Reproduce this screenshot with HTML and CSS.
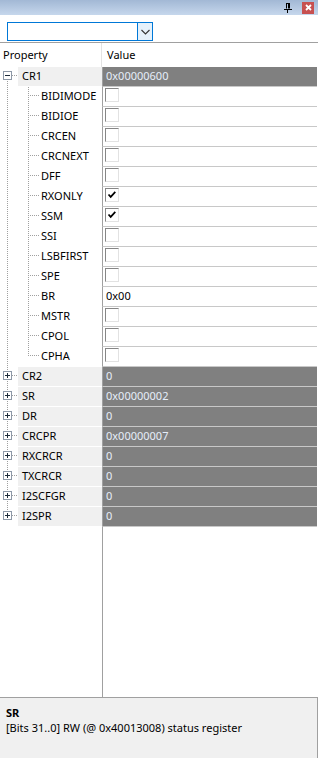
FILE: index.html
```html
<!DOCTYPE html>
<html lang="en">

<head>
    <meta charset="UTF-8">
    <meta name="viewport" content="width=device-width, initial-scale=1.0">
    <title>Registers</title>
    <link rel="stylesheet" href="styles.css">
</head>

<body>
    <div class="titlebar">
        <svg class="pin" width="8" height="10" viewBox="0 0 8 10">
            <path d="M2 0.5h4M2.5 0.5v5M5.5 0.5v5M4.5 0.5v5M0 6.5h8M3.5 7v3" stroke="#000" fill="none" stroke-width="1" />
        </svg>
        <span class="close">
            <svg width="7" height="7" viewBox="0 0 7 7">
                <path d="M1 1l5 5M6 1l-5 5" stroke="#fff" stroke-width="1.8" />
            </svg>
        </span>
    </div>

    <div class="toolbar">
        <div class="combo">
            <span class="combo-field"></span>
            <span class="combo-btn">
                <svg width="9" height="6" viewBox="0 0 9 6">
                    <path d="M0.5 1l4 4 4-4" stroke="#333" fill="none" stroke-width="1.1" />
                </svg>
            </span>
        </div>
    </div>

    <div class="head">
        <div class="h-prop">Property</div>
        <div class="h-val">Value</div>
    </div>

    <div class="rows">
        <!-- CR1, expanded -->
        <div class="row">
            <span class="gutter root first">
                <svg class="box" width="9" height="9" viewBox="0 0 9 9">
                    <rect x="0.5" y="0.5" width="8" height="8" fill="#fff" stroke="#8e99a8" />
                    <path d="M2 4.5h5" stroke="#1d2b3a" />
                </svg>
            </span>
            <span class="name root-name">CR1</span>
            <span class="val dark">0x00000600</span>
        </div>

        <div class="row"><span class="gutter child"></span><span class="name">BIDIMODE</span><span class="val"><span class="chk"></span></span></div>
        <div class="row"><span class="gutter child"></span><span class="name">BIDIOE</span><span class="val"><span class="chk"></span></span></div>
        <div class="row"><span class="gutter child"></span><span class="name">CRCEN</span><span class="val"><span class="chk"></span></span></div>
        <div class="row"><span class="gutter child"></span><span class="name">CRCNEXT</span><span class="val"><span class="chk"></span></span></div>
        <div class="row"><span class="gutter child"></span><span class="name">DFF</span><span class="val"><span class="chk"></span></span></div>
        <div class="row"><span class="gutter child"></span><span class="name">RXONLY</span><span class="val"><span class="chk"><svg width="12" height="12" viewBox="0 0 12 12"><path d="M2.5 5.5l2.2 2.4 4.6-5" stroke="#000" fill="none" stroke-width="1.7" /></svg></span></span></div>
        <div class="row"><span class="gutter child"></span><span class="name">SSM</span><span class="val"><span class="chk"><svg width="12" height="12" viewBox="0 0 12 12"><path d="M2.5 5.5l2.2 2.4 4.6-5" stroke="#000" fill="none" stroke-width="1.7" /></svg></span></span></div>
        <div class="row"><span class="gutter child"></span><span class="name">SSI</span><span class="val"><span class="chk"></span></span></div>
        <div class="row"><span class="gutter child"></span><span class="name">LSBFIRST</span><span class="val"><span class="chk"></span></span></div>
        <div class="row"><span class="gutter child"></span><span class="name">SPE</span><span class="val"><span class="chk"></span></span></div>
        <div class="row"><span class="gutter child"></span><span class="name">BR</span><span class="val">0x00</span></div>
        <div class="row"><span class="gutter child"></span><span class="name">MSTR</span><span class="val"><span class="chk"></span></span></div>
        <div class="row"><span class="gutter child"></span><span class="name">CPOL</span><span class="val"><span class="chk"></span></span></div>
        <div class="row"><span class="gutter child last"></span><span class="name">CPHA</span><span class="val"><span class="chk"></span></span></div>

        <!-- collapsed registers -->
        <div class="row"><span class="gutter root"><svg class="box" width="9" height="9" viewBox="0 0 9 9"><rect x="0.5" y="0.5" width="8" height="8" fill="#fff" stroke="#8e99a8" /><path d="M2 4.5h5M4.5 2v5" stroke="#1d2b3a" /></svg></span><span class="name root-name">CR2</span><span class="val dark">0</span></div>
        <div class="row"><span class="gutter root"><svg class="box" width="9" height="9" viewBox="0 0 9 9"><rect x="0.5" y="0.5" width="8" height="8" fill="#fff" stroke="#8e99a8" /><path d="M2 4.5h5M4.5 2v5" stroke="#1d2b3a" /></svg></span><span class="name root-name">SR</span><span class="val dark">0x00000002</span></div>
        <div class="row"><span class="gutter root"><svg class="box" width="9" height="9" viewBox="0 0 9 9"><rect x="0.5" y="0.5" width="8" height="8" fill="#fff" stroke="#8e99a8" /><path d="M2 4.5h5M4.5 2v5" stroke="#1d2b3a" /></svg></span><span class="name root-name">DR</span><span class="val dark">0</span></div>
        <div class="row"><span class="gutter root"><svg class="box" width="9" height="9" viewBox="0 0 9 9"><rect x="0.5" y="0.5" width="8" height="8" fill="#fff" stroke="#8e99a8" /><path d="M2 4.5h5M4.5 2v5" stroke="#1d2b3a" /></svg></span><span class="name root-name">CRCPR</span><span class="val dark">0x00000007</span></div>
        <div class="row"><span class="gutter root"><svg class="box" width="9" height="9" viewBox="0 0 9 9"><rect x="0.5" y="0.5" width="8" height="8" fill="#fff" stroke="#8e99a8" /><path d="M2 4.5h5M4.5 2v5" stroke="#1d2b3a" /></svg></span><span class="name root-name">RXCRCR</span><span class="val dark">0</span></div>
        <div class="row"><span class="gutter root"><svg class="box" width="9" height="9" viewBox="0 0 9 9"><rect x="0.5" y="0.5" width="8" height="8" fill="#fff" stroke="#8e99a8" /><path d="M2 4.5h5M4.5 2v5" stroke="#1d2b3a" /></svg></span><span class="name root-name">TXCRCR</span><span class="val dark">0</span></div>
        <div class="row"><span class="gutter root"><svg class="box" width="9" height="9" viewBox="0 0 9 9"><rect x="0.5" y="0.5" width="8" height="8" fill="#fff" stroke="#8e99a8" /><path d="M2 4.5h5M4.5 2v5" stroke="#1d2b3a" /></svg></span><span class="name root-name">I2SCFGR</span><span class="val dark">0</span></div>
        <div class="row"><span class="gutter root last"><svg class="box" width="9" height="9" viewBox="0 0 9 9"><rect x="0.5" y="0.5" width="8" height="8" fill="#fff" stroke="#8e99a8" /><path d="M2 4.5h5M4.5 2v5" stroke="#1d2b3a" /></svg></span><span class="name root-name">I2SPR</span><span class="val dark">0</span></div>
    </div>

    <div class="filler">
        <div class="filler-prop"></div>
    </div>

    <div class="desc">
        <div class="desc-title">SR</div>
        <div>[Bits 31..0] RW (@ 0x40013008) status register</div>
    </div>
</body>

</html>
```

FILE: styles.css
```css
body {
    margin: 0;
    width: 318px;
    height: 758px;
    overflow: hidden;
    display: flex;
    flex-direction: column;
    background-color: #fff;
    color: #000;
    font-family: "Noto Sans", "Open Sans", sans-serif;
    font-size: 11px;
}

/* title bar */
.titlebar {
    height: 15px;
    flex: none;
    display: flex;
    align-items: center;
    justify-content: flex-end;
    background: linear-gradient(to bottom, #a2b8d5, #c6d7ec);
}

.pin {
    margin-right: 10px;
}

.close {
    width: 12px;
    height: 12px;
    margin-right: 4px;
    background-color: #c75050;
    display: flex;
    align-items: center;
    justify-content: center;
}

/* combo box row */
.toolbar {
    flex: none;
    height: 28px;
    padding: 7px 0 0 7px;
    box-sizing: border-box;
    border-bottom: 1px solid #a0a0a0;
}

.combo {
    width: 146px;
    height: 19px;
    box-sizing: border-box;
    border: 1px solid #0078d7;
    display: flex;
}

.combo-field {
    flex: 1;
}

.combo-btn {
    width: 14px;
    border-left: 1px solid #0078d7;
    background-color: #e5f1fb;
    display: flex;
    align-items: center;
    justify-content: center;
}

/* header */
.head {
    flex: none;
    height: 24px;
    display: flex;
    align-items: center;
}

.h-prop {
    width: 102px;
    height: 24px;
    line-height: 24px;
    padding-left: 3px;
    box-sizing: border-box;
    border-right: 1px solid #e3e3e3;
}

.h-val {
    padding-left: 5px;
    line-height: 24px;
}

/* rows */
.rows {
    flex: none;
}

.row {
    display: flex;
    height: 20px;
}

.gutter {
    flex: none;
    height: 20px;
}

.gutter.root {
    width: 18px;
    background:
        repeating-linear-gradient(to bottom, #a0a0a0 0 1px, transparent 1px 2px) 7px 0 / 1px 20px no-repeat,
        repeating-linear-gradient(to right, #a0a0a0 0 1px, transparent 1px 2px) 12px 8px / 6px 1px no-repeat;
}

.gutter.root.first {
    background:
        repeating-linear-gradient(to bottom, #a0a0a0 0 1px, transparent 1px 2px) 7px 12px / 1px 8px no-repeat,
        repeating-linear-gradient(to right, #a0a0a0 0 1px, transparent 1px 2px) 12px 8px / 6px 1px no-repeat;
}

.gutter.root.last {
    background:
        repeating-linear-gradient(to bottom, #a0a0a0 0 1px, transparent 1px 2px) 7px 0 / 1px 4px no-repeat,
        repeating-linear-gradient(to right, #a0a0a0 0 1px, transparent 1px 2px) 12px 8px / 6px 1px no-repeat;
}

.box {
    display: block;
    margin: 4px 0 0 3px;
}

.gutter.child {
    width: 41px;
    background:
        repeating-linear-gradient(to bottom, #a0a0a0 0 1px, transparent 1px 2px) 7px 0 / 1px 20px no-repeat,
        repeating-linear-gradient(to bottom, #a0a0a0 0 1px, transparent 1px 2px) 28px 0 / 1px 20px no-repeat,
        repeating-linear-gradient(to right, #a0a0a0 0 1px, transparent 1px 2px) 30px 8px / 10px 1px no-repeat;
}

.gutter.child.last {
    background:
        repeating-linear-gradient(to bottom, #a0a0a0 0 1px, transparent 1px 2px) 7px 0 / 1px 20px no-repeat,
        repeating-linear-gradient(to bottom, #a0a0a0 0 1px, transparent 1px 2px) 28px 0 / 1px 9px no-repeat,
        repeating-linear-gradient(to right, #a0a0a0 0 1px, transparent 1px 2px) 30px 8px / 10px 1px no-repeat;
}

.name {
    flex: 1;
    height: 20px;
    line-height: 18px;
    box-sizing: border-box;
    white-space: nowrap;
    overflow: hidden;
}

.root-name {
    padding-left: 4px;
    background-color: #f0f0f0;
    border-bottom: 1px solid #fff;
}

.val {
    flex: none;
    width: 215px;
    height: 20px;
    margin-right: 1px;
    padding-left: 3px;
    line-height: 18px;
    box-sizing: border-box;
    border-left: 1px solid #a0a0a0;
    border-bottom: 1px solid #c8c8c8;
}

.val.dark {
    background-color: #808080;
    color: #e6eefa;
}

.chk {
    display: flex;
    align-items: center;
    justify-content: center;
    width: 14px;
    height: 14px;
    margin: 1px 0 0 -1px;
    box-sizing: border-box;
    border-top: 1px solid #868686;
    border-left: 1px solid #868686;
    border-right: 1px solid #e2e2e2;
    border-bottom: 1px solid #e2e2e2;
    background-color: #fff;
}

/* empty grid area */
.filler {
    flex: 1;
}

.filler-prop {
    width: 102px;
    height: 100%;
    border-right: 1px solid #a0a0a0;
}

/* description panel */
.desc {
    flex: none;
    height: 61px;
    box-sizing: border-box;
    padding: 7px 0 0 6px;
    line-height: 15px;
    background-color: #f0f0f0;
    border-top: 1px solid #a0a0a0;
    border-right: 1px solid #a0a0a0;
}

.desc-title {
    font-weight: bold;
}
```
